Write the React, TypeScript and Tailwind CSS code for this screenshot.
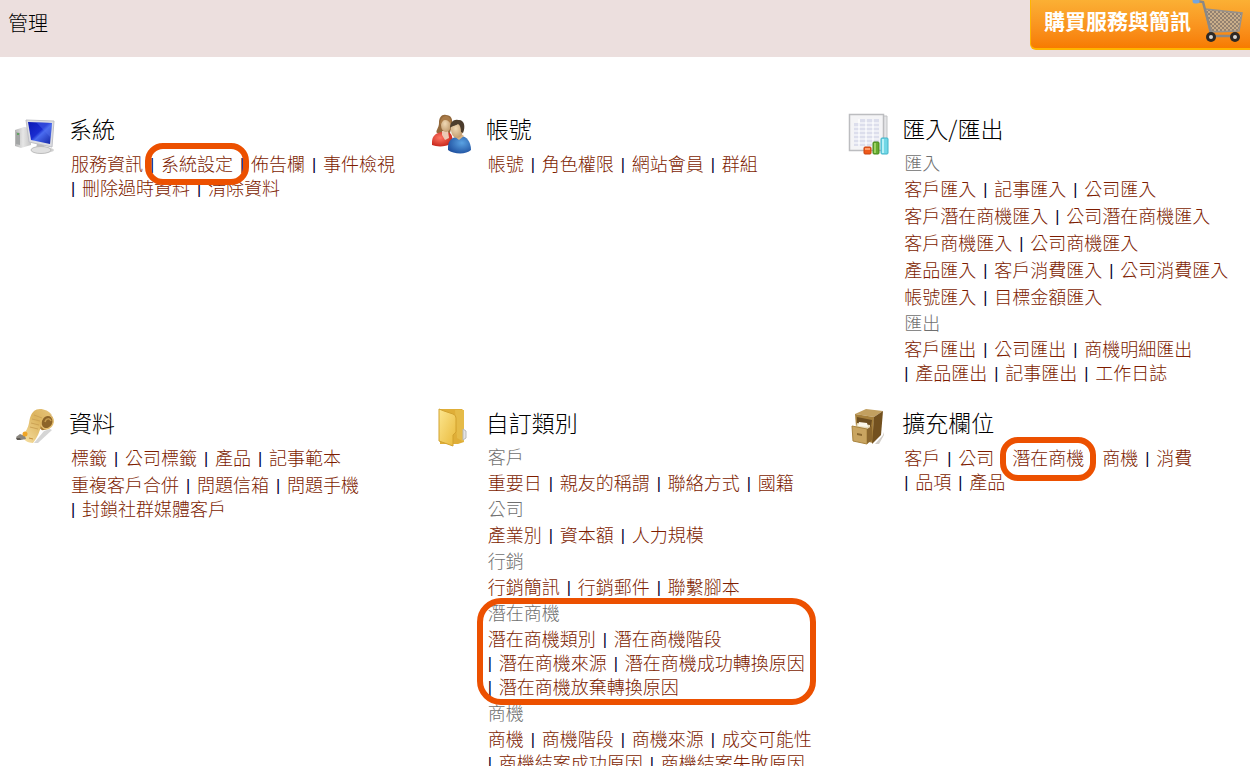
import { Fragment, type ReactNode } from 'react';
import clsx from 'clsx';

interface Row {
  items: string[];
  // a wrapped row carries on the list of the row above it
  wrapped?: boolean;
}

interface Group {
  label?: string;
  rows: Row[];
  marked?: boolean;
}

interface Mark {
  item: string;
  className: string;
}

interface Section {
  title: string;
  icon: ReactNode;
  groups: Group[];
  mark?: Mark;
}

function ComputerIcon() {
  return (
    <svg viewBox="0 0 42 42" className="h-[42px] w-[42px]" aria-hidden="true">
      <defs>
        <linearGradient id="screen" x1="0" y1="0" x2="1" y2="1">
          <stop offset="0" stopColor="#0a18b4" />
          <stop offset="0.45" stopColor="#1a2cd0" />
          <stop offset="0.55" stopColor="#4a6cf0" />
          <stop offset="1" stopColor="#1020a0" />
        </linearGradient>
        <linearGradient id="tower" x1="0" y1="0" x2="1" y2="0">
          <stop offset="0" stopColor="#b4b4b4" />
          <stop offset="0.5" stopColor="#e6e6e6" />
          <stop offset="1" stopColor="#c4c4c4" />
        </linearGradient>
      </defs>
      <ellipse cx="29" cy="37" rx="11" ry="3" fill="#d2d2d2" />
      <path d="M1 17l9-3 7 1v17l-10 3-6-2z" fill="url(#tower)" />
      <path d="M2 19l4 1v12l-4-1z" fill="#a3a5a5" />
      <circle cx="4" cy="21" r="1" fill="#4da34d" />
      <path d="M23 30l7 2 1 5h-9z" fill="#bcbcbc" />
      <ellipse cx="27" cy="37" rx="10" ry="3.500" fill="#e0e0e0" stroke="#bdbdbd" />
      <path d="M12 7l28 1-2 26-23-5z" fill="#dcdde2" stroke="#bfc0c6" />
      <path d="M14 9l24 1-2 21-19-4z" fill="url(#screen)" />
      <path d="M22 9l16 1-1 15z" fill="#5474ee" opacity=".4" />
    </svg>
  );
}

function PeopleIcon() {
  return (
    <svg viewBox="0 0 42 42" className="h-[42px] w-[42px]" aria-hidden="true">
      <defs>
        <radialGradient id="red" cx=".4" cy=".4" r=".7">
          <stop offset="0" stopColor="#ff7765" />
          <stop offset="1" stopColor="#c11c12" />
        </radialGradient>
        <radialGradient id="blue" cx=".6" cy=".4" r=".7">
          <stop offset="0" stopColor="#5aa2e2" />
          <stop offset="1" stopColor="#1c4c9c" />
        </radialGradient>
        <radialGradient id="skin" cx=".4" cy=".4" r=".7">
          <stop offset="0" stopColor="#efd8b4" />
          <stop offset="1" stopColor="#bd9668" />
        </radialGradient>
      </defs>
      <path d="M8 10C8 4 11 1 15 2c5 0 7 4 6 10l-2 8H6c-2-2 2-5 2-10z" fill="#93693c" />
      <path d="M1 29c0-6 4-9 9-10l9 1c3 3 3 8 1 11-6 3-14 3-19 1z" fill="url(#red)" />
      <path d="M11 18h6l1 7-4 2-3-5z" fill="#edc9b4" />
      <ellipse cx="15" cy="12" rx="5" ry="7" fill="url(#skin)" />
      <path d="M9 12c0-6 3-9 6-9s6 4 5 9c-1-3-3-5-6-5-2 0-3 2-5 5z" fill="#a97b48" />
      <path d="M17 34c0-7 5-10 11-11 7-1 12 5 12 14-5 5-18 4-23 0z" fill="url(#blue)" />
      <path d="M23 23l6-3 4 3-5 4z" fill="#d6b387" />
      <ellipse cx="26" cy="17" rx="6" ry="8" fill="url(#skin)" />
      <path d="M19 15c0-6 4-9 8-8 6-1 8 6 5 13l-2-1c0-4-1-7-3-8-2 2-5 1-8 4z" fill="#4b3c2c" />
    </svg>
  );
}

function SheetIcon() {
  return (
    <svg viewBox="0 0 42 42" className="h-[42px] w-[42px]" aria-hidden="true">
      <path d="M5 3h35v34H5z" fill="#e4e5e7" stroke="#c2c3c5" />
      <path d="M2.500 1.500h34v36h-34z" fill="#f4f4f6" stroke="#bcbdc0" strokeWidth="1.500" />
      <path d="M13 6h19v5H13zM7 10h25v23H7z" fill="#dcdeec" />
      <path d="M7 14h25M7 18h25M7 22h25M7 26h25M7 30h25M12 6v27M19 6v27M26 6v27M13 10h19" stroke="#fff" strokeWidth="1.200" />
      <rect x="17" y="34" width="7" height="7" rx="1" fill="#ee5a1c" stroke="#c8400c" />
      <path d="M18 35h5v2h-5z" fill="#ff9b67" />
      <rect x="26" y="29" width="6" height="12" rx="1" fill="#66ab2e" stroke="#45871b" />
      <path d="M27 30h2v10h-2z" fill="#9bd263" />
      <rect x="34" y="25" width="7" height="16" rx="1" fill="#72d7e6" stroke="#40b3c8" />
      <path d="M35 26h2v14h-2z" fill="#b8f1f8" />
    </svg>
  );
}

function ScrollIcon() {
  return (
    <svg viewBox="0 0 42 42" className="h-[42px] w-[42px]" aria-hidden="true">
      <defs>
        <linearGradient id="paper" x1="0" y1="1" x2="1" y2="0">
          <stop offset="0" stopColor="#f8e2a6" />
          <stop offset="0.6" stopColor="#dcb45e" />
          <stop offset="1" stopColor="#e6c47c" />
        </linearGradient>
      </defs>
      <path d="M20 36l10-12 6-2 2 1-14 13z" fill="#d5d5d5" />
      <path d="M25 3c6 0 12 3 14 8 1 6-3 11-9 12-4 1-6-4-4-9z" fill="#a97b35" />
      <ellipse cx="33" cy="15" rx="6" ry="7" fill="#8c6429" stroke="#e3bd6e" strokeWidth="1.500" transform="rotate(25 33 15)" />
      <path d="M31 15c1-4 5-4 6-1" fill="none" stroke="#c3994d" strokeWidth="1.500" />
      <path d="M20 4c4-4 14-2 18 4-7-1-10 4-11 10-1 7-4 13-8 18-5 0-9-3-11-6 4-6 6-9 7-14 1-6 2-9 5-12z" fill="url(#paper)" />
      <path d="M20 8l8 3M18 12l8 2M17 16l8 2M16 20l8 2" stroke="#cda354" />
      <path d="M2 30l4-3 5 2 1 3-5 1-4-1z" fill="#8b8780" />
      <path d="M2 31h4l1 2H3z" fill="#5e5a53" />
      <circle cx="11" cy="27" r="2.500" fill="#f0a526" />
      <path d="M15 31l4 1" stroke="#c78f3a" />
    </svg>
  );
}

function FolderIcon() {
  return (
    <svg viewBox="0 0 42 42" className="h-[42px] w-[42px]" aria-hidden="true">
      <defs>
        <linearGradient id="folder" x1="0" y1="0" x2="1" y2="1">
          <stop offset="0" stopColor="#fce68f" />
          <stop offset="1" stopColor="#e9b93a" />
        </linearGradient>
      </defs>
      <path d="M9 2h22l2 2v31l-6 2H9z" fill="#dfae38" />
      <path d="M24 3h9v32l-7-4z" fill="#e5bb48" />
      <path d="M32 22l3 2v7l-3 2z" fill="#e4e4e4" stroke="#b9b9b9" />
      <path d="M8 2l5 2 9 3q3 1 3 4v14l-3 3v11l-14-5z" fill="url(#folder)" stroke="#d2a22f" />
    </svg>
  );
}

function CabinetIcon() {
  return (
    <svg viewBox="0 0 42 42" className="h-[42px] w-[42px]" aria-hidden="true">
      <path d="M28 37l8-9v-3l1 3-5 9z" fill="#d3cfc9" />
      <path d="M8 7l11-5 17 2-9 6z" fill="#c2a060" />
      <path d="M8 7l19 3-1 26-16-4z" fill="#a6803c" />
      <path d="M27 10l9-6-2 24-9 9z" fill="#73511f" />
      <path d="M10 10l15 3-1 7-14-3z" fill="#6d4e20" />
      <path d="M10 16l13 2v5l-14-3z" fill="#e8dcbd" />
      <path d="M12 15l8 1 1 4-10-1z" fill="#fbf7ea" />
      <path d="M5 19l15 3v15L6 34z" fill="#c9a561" stroke="#a9843f" />
      <path d="M20 22l5-3v14l-5 4z" fill="#8a662d" />
      <path d="M10 26l5 1v2l-5-1z" fill="#8b6930" />
    </svg>
  );
}

function CartIcon() {
  return (
    <svg viewBox="0 0 54 44" className="h-11 w-[54px]" aria-hidden="true">
      <defs>
        <pattern id="mesh" width="4" height="4" patternUnits="userSpaceOnUse">
          <path d="M0 0l4 4M4 0l-4 4" stroke="#857669" strokeWidth=".8" />
        </pattern>
      </defs>
      <path d="M14 9l37 4-3 18-29 1z" fill="#c9ae8a" />
      <path d="M14 9l37 4-3 18-29 1z" fill="url(#mesh)" stroke="#96918c" strokeWidth="1.500" />
      <path d="M6 1l6 1 8 30-1 4h26" fill="none" stroke="#8b8885" strokeWidth="2.500" />
      <path d="M4 1h2" stroke="#75a5dc" strokeWidth="5" strokeLinecap="round" />
      <circle cx="20" cy="37" r="5" fill="#2d2825" />
      <circle cx="20" cy="37" r="2" fill="#d8d5d2" />
      <circle cx="44" cy="37" r="5" fill="#2d2825" />
      <circle cx="44" cy="37" r="2" fill="#d8d5d2" />
    </svg>
  );
}

const sections: Section[] = [
  {
    title: '系統',
    icon: <ComputerIcon />,
    mark: { item: '系統設定', className: '-inset-x-4 -top-[10px] -bottom-2' },
    groups: [
      {
        rows: [
          { items: ['服務資訊', '系統設定', '佈告欄', '事件檢視'] },
          { items: ['刪除過時資料', '清除資料'], wrapped: true },
        ],
      },
    ],
  },
  {
    title: '帳號',
    icon: <PeopleIcon />,
    groups: [{ rows: [{ items: ['帳號', '角色權限', '網站會員', '群組'] }] }],
  },
  {
    title: '匯入/匯出',
    icon: <SheetIcon />,
    groups: [
      {
        label: '匯入',
        rows: [
          { items: ['客戶匯入', '記事匯入', '公司匯入'] },
          { items: ['客戶潛在商機匯入', '公司潛在商機匯入'] },
          { items: ['客戶商機匯入', '公司商機匯入'] },
          { items: ['產品匯入', '客戶消費匯入', '公司消費匯入'] },
          { items: ['帳號匯入', '目標金額匯入'] },
        ],
      },
      {
        label: '匯出',
        rows: [
          { items: ['客戶匯出', '公司匯出', '商機明細匯出'] },
          { items: ['產品匯出', '記事匯出', '工作日誌'], wrapped: true },
        ],
      },
    ],
  },
  {
    title: '資料',
    icon: <ScrollIcon />,
    groups: [
      {
        rows: [
          { items: ['標籤', '公司標籤', '產品', '記事範本'] },
          { items: ['重複客戶合併', '問題信箱', '問題手機'] },
          { items: ['封鎖社群媒體客戶'], wrapped: true },
        ],
      },
    ],
  },
  {
    title: '自訂類別',
    icon: <FolderIcon />,
    groups: [
      { label: '客戶', rows: [{ items: ['重要日', '親友的稱謂', '聯絡方式', '國籍'] }] },
      { label: '公司', rows: [{ items: ['產業別', '資本額', '人力規模'] }] },
      { label: '行銷', rows: [{ items: ['行銷簡訊', '行銷郵件', '聯繫腳本'] }] },
      {
        label: '潛在商機',
        marked: true,
        rows: [
          { items: ['潛在商機類別', '潛在商機階段'] },
          { items: ['潛在商機來源', '潛在商機成功轉換原因'], wrapped: true },
          { items: ['潛在商機放棄轉換原因'], wrapped: true },
        ],
      },
      {
        label: '商機',
        rows: [
          { items: ['商機', '商機階段', '商機來源', '成交可能性'] },
          { items: ['商機結案成功原因', '商機結案失敗原因'], wrapped: true },
        ],
      },
    ],
  },
  {
    title: '擴充欄位',
    icon: <CabinetIcon />,
    mark: { item: '潛在商機', className: '-inset-x-3 -inset-y-[10px]' },
    groups: [
      {
        rows: [
          { items: ['客戶', '公司', '潛在商機', '商機', '消費'] },
          { items: ['品項', '產品'], wrapped: true },
        ],
      },
    ],
  },
];

function LinkRow({ row, mark }: { row: Row; mark?: Mark }) {
  return (
    <div className="flex h-6 items-center whitespace-nowrap text-lg leading-6">
      {row.items.map((item, i) => (
        <Fragment key={item}>
          {(i > 0 || row.wrapped) && (
            <span className={clsx('w-[11px] text-base leading-6 text-[#000030]', i > 0 && 'ml-[7px]')}>
              |
            </span>
          )}
          <a href="#" className="relative text-[#7d1c00] hover:underline">
            {item}
            {item === mark?.item && (
              <span
                className={clsx(
                  'pointer-events-none absolute z-10 rounded-[18px] border-6 border-[#ec5000]',
                  mark.className,
                )}
              />
            )}
          </a>
        </Fragment>
      ))}
    </div>
  );
}

function LinkGroup({ group, mark }: { group: Group; mark?: Mark }) {
  return (
    <div className="relative w-max">
      {group.label && <h3 className="mb-[3px] text-lg leading-[22px] text-[#707070]">{group.label}</h3>}
      {group.rows.map((row, i) => (
        <div key={i} className={clsx(!group.rows[i + 1]?.wrapped && 'mb-[3px]')}>
          <LinkRow row={row} mark={mark} />
        </div>
      ))}
      {group.marked && (
        <div className="pointer-events-none absolute -inset-x-[11px] -inset-y-[5px] z-10 rounded-3xl border-6 border-[#ec5000]" />
      )}
    </div>
  );
}

export default function App() {
  return (
    <div className="h-screen overflow-hidden bg-white font-['Liberation_Sans','Noto_Sans_CJK_TC',sans-serif] font-light text-black">
      <header className="flex h-[57px] items-start justify-between bg-[#ecdfde]">
        <h1 className="pt-2 pl-2 text-xl leading-8">管理</h1>
        <button
          type="button"
          className="flex h-[50px] items-start rounded-bl-md border-b-2 border-l border-[#ffb400] bg-linear-to-b from-[#fbb034] to-[#f77b00] pr-[5px] pl-[13px] text-white"
        >
          <span className="pt-[6px] text-[21px] leading-8 font-bold">購買服務與簡訊</span>
          <CartIcon />
        </button>
      </header>

      <main className="grid grid-cols-3 gap-y-[17px] pt-[55px]">
        {sections.map((section) => (
          <section key={section.title} className="flex items-start pl-[14px]">
            <div className="w-[55px] shrink-0 pt-[1px]">{section.icon}</div>
            <div>
              <h2 className="mb-[9px] font-['Noto_Sans_CJK_TC',sans-serif] text-[23px] leading-8">
                {section.title}
              </h2>
              <div className="pl-[2px]">
                {section.groups.map((group, i) => (
                  <LinkGroup key={i} group={group} mark={section.mark} />
                ))}
              </div>
            </div>
          </section>
        ))}
      </main>
    </div>
  );
}
